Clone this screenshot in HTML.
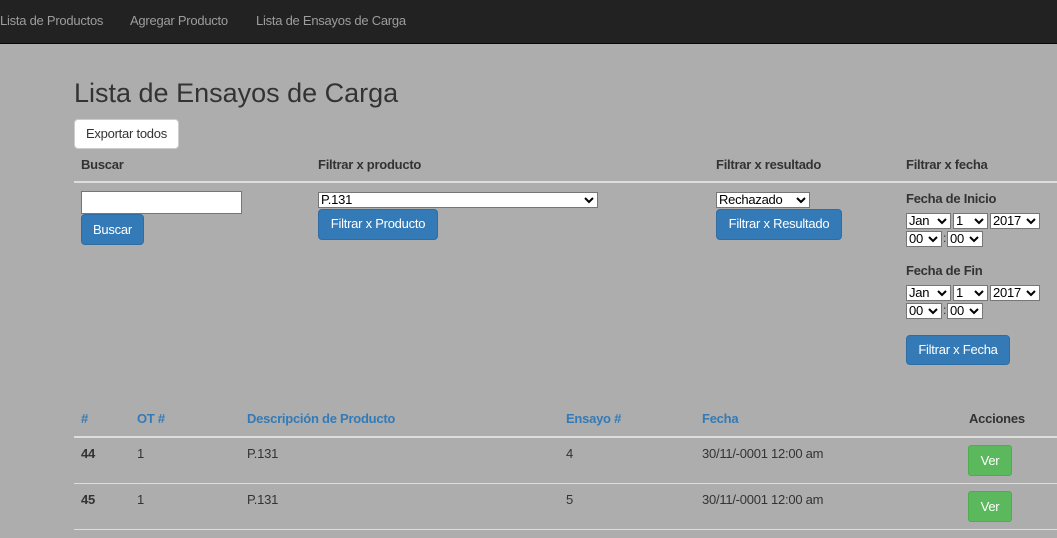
<!DOCTYPE html>
<html><head><meta charset="utf-8"><style>
*{box-sizing:border-box;margin:0;padding:0}
body{width:1057px;height:538px;overflow:hidden;background:#adadad;font-family:"Liberation Sans",sans-serif;font-size:13px;letter-spacing:-0.25px;color:#333;position:relative}
.a{position:absolute;white-space:nowrap}
.nav{position:absolute;left:0;top:0;width:1057px;height:44px;background:#222;border-bottom:1px solid #080808}
.nav span{position:absolute;top:13px;color:#9d9d9d;font-size:13px}
.b{font-weight:bold}
.btn{position:absolute;background:#337ab7;border:1px solid #2e6da4;border-radius:4px;color:#fff;font-size:13px;text-align:center}
.sel{position:absolute;background:#fff;border:1px solid #767676;height:16px;font-size:13px;line-height:14px;padding-left:2px;color:#000}
.sel svg{position:absolute;right:3px;top:4px}
.line{position:absolute;left:74px;width:983px;height:2px;background:#ddd}
.lk{color:#337ab7;font-weight:bold}
.ver{position:absolute;left:968px;width:44px;height:31px;background:#5cb85c;border:1px solid #4cae4c;border-radius:3px;color:#fff;text-align:center;line-height:29px}
</style></head><body>
<div class="nav"><span style="left:0">Lista de Productos</span><span style="left:130px">Agregar Producto</span><span style="left:256px">Lista de Ensayos de Carga</span></div>
<div class="a" style="left:74px;top:78px;font-size:27px;letter-spacing:0;color:#333">Lista de Ensayos de Carga</div>
<div class="a" style="left:74px;top:119px;width:105px;height:30px;background:#fff;border:1px solid #ccc;border-radius:4px;text-align:center;line-height:27px;color:#333">Exportar todos</div>
<div class="a b" style="left:81px;top:157px">Buscar</div>
<div class="a b" style="left:318px;top:157px">Filtrar x producto</div>
<div class="a b" style="left:716px;top:157px">Filtrar x resultado</div>
<div class="a b" style="left:906px;top:157px">Filtrar x fecha</div>
<div class="line" style="top:181px"></div>
<div class="a" style="left:81px;top:191px;width:161px;height:23px;background:#fff;border:1px solid #767676"></div>
<div class="btn" style="left:81px;top:214px;width:63px;height:31px;line-height:29px">Buscar</div>
<div class="sel" style="left:318px;top:192px;width:280px">P.131<svg width="10" height="7" viewBox="0 0 10 7"><path d="M1 1l4 4 4-4" fill="none" stroke="#000" stroke-width="2"/></svg></div>
<div class="btn" style="left:318px;top:209px;width:120px;height:31px;line-height:27px">Filtrar x Producto</div>
<div class="sel" style="left:716px;top:192px;width:94px">Rechazado<svg width="10" height="7" viewBox="0 0 10 7"><path d="M1 1l4 4 4-4" fill="none" stroke="#000" stroke-width="2"/></svg></div>
<div class="btn" style="left:716px;top:209px;width:126px;height:31px;line-height:27px">Filtrar x Resultado</div>
<div class="a b" style="left:906px;top:191px">Fecha de Inicio</div>
<div class="sel" style="left:906px;top:213px;width:45px">Jan<svg width="10" height="7" viewBox="0 0 10 7"><path d="M1 1l4 4 4-4" fill="none" stroke="#000" stroke-width="2"/></svg></div>
<div class="sel" style="left:953px;top:213px;width:35px">1<svg width="10" height="7" viewBox="0 0 10 7"><path d="M1 1l4 4 4-4" fill="none" stroke="#000" stroke-width="2"/></svg></div>
<div class="sel" style="left:990px;top:213px;width:50px">2017<svg width="10" height="7" viewBox="0 0 10 7"><path d="M1 1l4 4 4-4" fill="none" stroke="#000" stroke-width="2"/></svg></div>
<div class="sel" style="left:906px;top:231px;width:36px">00<svg width="10" height="7" viewBox="0 0 10 7"><path d="M1 1l4 4 4-4" fill="none" stroke="#000" stroke-width="2"/></svg></div>
<div class="a" style="left:943px;top:231px;font-size:12px">:</div>
<div class="sel" style="left:947px;top:231px;width:36px">00<svg width="10" height="7" viewBox="0 0 10 7"><path d="M1 1l4 4 4-4" fill="none" stroke="#000" stroke-width="2"/></svg></div>
<div class="a b" style="left:906px;top:263px">Fecha de Fin</div>
<div class="sel" style="left:906px;top:285px;width:45px">Jan<svg width="10" height="7" viewBox="0 0 10 7"><path d="M1 1l4 4 4-4" fill="none" stroke="#000" stroke-width="2"/></svg></div>
<div class="sel" style="left:953px;top:285px;width:35px">1<svg width="10" height="7" viewBox="0 0 10 7"><path d="M1 1l4 4 4-4" fill="none" stroke="#000" stroke-width="2"/></svg></div>
<div class="sel" style="left:990px;top:285px;width:50px">2017<svg width="10" height="7" viewBox="0 0 10 7"><path d="M1 1l4 4 4-4" fill="none" stroke="#000" stroke-width="2"/></svg></div>
<div class="sel" style="left:906px;top:303px;width:36px">00<svg width="10" height="7" viewBox="0 0 10 7"><path d="M1 1l4 4 4-4" fill="none" stroke="#000" stroke-width="2"/></svg></div>
<div class="a" style="left:943px;top:303px;font-size:12px">:</div>
<div class="sel" style="left:947px;top:303px;width:36px">00<svg width="10" height="7" viewBox="0 0 10 7"><path d="M1 1l4 4 4-4" fill="none" stroke="#000" stroke-width="2"/></svg></div>
<div class="btn" style="left:906px;top:335px;width:104px;height:30px;line-height:27px">Filtrar x Fecha</div>
<div class="a lk" style="left:81px;top:411px">#</div>
<div class="a lk" style="left:137px;top:411px">OT #</div>
<div class="a lk" style="left:247px;top:411px">Descripción de Producto</div>
<div class="a lk" style="left:566px;top:411px">Ensayo #</div>
<div class="a lk" style="left:702px;top:411px">Fecha</div>
<div class="a b" style="left:969px;top:411px">Acciones</div>
<div class="line" style="top:436px"></div>
<div class="a b" style="left:81px;top:446px">44</div>
<div class="a" style="left:137px;top:446px">1</div>
<div class="a" style="left:247px;top:446px">P.131</div>
<div class="a" style="left:566px;top:446px">4</div>
<div class="a" style="left:702px;top:446px">30/11/-0001 12:00 am</div>
<div class="ver" style="top:445px">Ver</div>
<div class="line" style="top:483px;height:1px"></div>
<div class="a b" style="left:81px;top:492px">45</div>
<div class="a" style="left:137px;top:492px">1</div>
<div class="a" style="left:247px;top:492px">P.131</div>
<div class="a" style="left:566px;top:492px">5</div>
<div class="a" style="left:702px;top:492px">30/11/-0001 12:00 am</div>
<div class="ver" style="top:491px">Ver</div>
<div class="line" style="top:529px;height:1px"></div>
</body></html>
